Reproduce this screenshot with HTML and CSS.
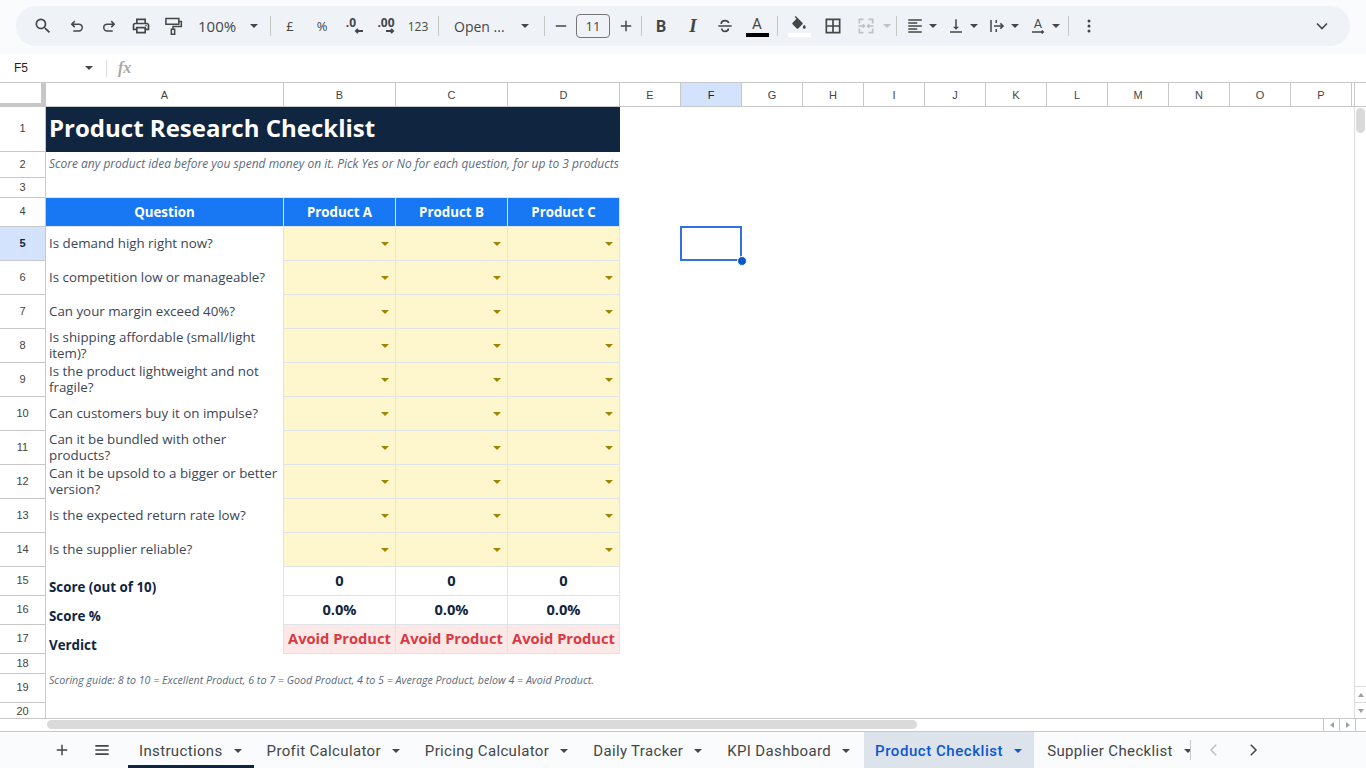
FILE: index.html
```html
<!DOCTYPE html>
<html lang="en">
<head>
    <meta charset="UTF-8">
    <meta name="viewport" content="width=device-width, initial-scale=1.0">
    <title>Product Research Checklist</title>
    <link rel="stylesheet" href="styles.css">
</head>
<body>
    <div class="toolbar-band">
        <div class="toolbar">
            <div class="tb-btn"><svg viewBox="0 0 24 24" width="20" height="20"><path d="M15.5 14h-.79l-.28-.27A6.471 6.471 0 0 0 16 9.5 6.5 6.5 0 1 0 9.5 16c1.61 0 3.09-.59 4.23-1.57l.27.28v.79l5 4.99L20.49 19l-4.99-5zm-6 0C7.01 14 5 11.99 5 9.5S7.01 5 9.5 5 14 7.01 14 9.5 11.99 14 9.5 14z"/></svg></div>
            <div class="tb-btn gap-left"><svg class="line" viewBox="0 0 24 24" width="18" height="18"><path d="M9 5.5 5 9.5l4 4M5 9.5h9.5a4.5 4.5 0 0 1 0 9H7"/></svg></div>
            <div class="tb-btn"><svg class="line" viewBox="0 0 24 24" width="18" height="18"><path d="M15 5.5l4 4-4 4M19 9.5H9.5a4.5 4.5 0 0 0 0 9H17"/></svg></div>
            <div class="tb-btn"><svg viewBox="0 0 24 24" width="20" height="20"><path d="M19 8h-1V3H6v5H5c-1.66 0-3 1.34-3 3v6h4v4h12v-4h4v-6c0-1.66-1.34-3-3-3zM8 5h8v3H8V5zm8 14H8v-4h8v4zm4-4h-2v-2H6v2H4v-4c0-.55.45-1 1-1h14c.55 0 1 .45 1 1v4z"/><circle cx="18" cy="11.5" r="1"/></svg></div>
            <div class="tb-btn"><svg class="line roller" viewBox="0 0 24 24" width="20" height="20"><path d="M3.500 3h15.500v7H3.500zM19 6.500h3v6h-10V16M10 16h4v6h-4z"/></svg></div>
            <div class="tb-zoom">100%<span class="caret"></span></div>
            <div class="tb-sep"></div>
            <div class="tb-btn tb-text">£</div>
            <div class="tb-btn tb-text">%</div>
            <div class="tb-btn tb-dec dec-less"><span>.0</span><svg class="line" viewBox="0 0 10 6" width="10" height="6"><path d="M9 3H2M4 1 2 3l2 2"/></svg></div>
            <div class="tb-btn tb-dec dec-more"><span>.00</span><svg class="line" viewBox="0 0 10 6" width="10" height="6"><path d="M1 3h7M6 1l2 2-2 2"/></svg></div>
            <div class="tb-btn tb-text tb-123">123</div>
            <div class="tb-sep"></div>
            <div class="tb-font">Open ...<span class="caret"></span></div>
            <div class="tb-sep"></div>
            <div class="tb-step step-minus"><svg class="line" viewBox="0 0 24 24" width="18" height="18"><path d="M5 12h14"/></svg></div>
            <div class="tb-size">11</div>
            <div class="tb-step"><svg class="line" viewBox="0 0 24 24" width="18" height="18"><path d="M5 12h14M12 5v14"/></svg></div>
            <div class="tb-sep sep-tight"></div>
            <div class="tb-btn tb-letter tb-bold">B</div>
            <div class="tb-btn tb-letter tb-italic">I</div>
            <div class="tb-btn"><svg class="line" viewBox="0 0 24 24" width="20" height="20"><path d="M4 12h16M7.500 9.500C7.500 7 9.500 5.500 12 5.500s4 1.200 4.500 3M8 15c.3 2.200 2 3.500 4 3.500s4-1.300 4-3.500"/></svg></div>
            <div class="tb-btn tb-color"><span>A</span><i class="bar bar-black"></i></div>
            <div class="tb-sep"></div>
            <div class="tb-btn tb-fill"><svg viewBox="0 0 24 24" width="18" height="18"><path d="M16.560 8.940 7.620 0 6.210 1.410l2.380 2.380-5.150 5.150c-.59.59-.59 1.540 0 2.120l5.500 5.500c.29.29.68.44 1.060.44s.77-.15 1.060-.44l5.500-5.500c.59-.58.59-1.530 0-2.120zM19 11.500s-2 2.170-2 3.500c0 1.100.9 2 2 2s2-.9 2-2c0-1.330-2-3.500-2-3.500z"/></svg><i class="bar bar-white"></i></div>
            <div class="tb-btn tb-borders"><svg viewBox="0 0 24 24" width="20" height="20"><path d="M3 3v18h18V3H3zm8 16H5v-6h6v6zm0-8H5V5h6v6zm8 8h-6v-6h6v6zm0-8h-6V5h6v6z"/></svg></div>
            <div class="tb-merge"><svg class="line off" viewBox="0 0 24 24" width="20" height="20"><path d="M9 4H4v5M4 15v5h5M15 4h5v5M20 15v5h-5M3 12h7M8 10l2 2-2 2M21 12h-7M16 10l-2 2 2 2"/></svg><span class="caret caret-off"></span></div>
            <div class="tb-sep"></div>
            <div class="tb-menu menu-first"><svg viewBox="0 0 24 24" width="18" height="18"><path d="M15 15H3v2h12v-2zm0-8H3v2h12V7zM3 13h18v-2H3v2zm0 8h18v-2H3v2zM3 3v2h18V3H3z"/></svg><span class="caret"></span></div>
            <div class="tb-menu"><svg viewBox="0 0 24 24" width="18" height="18"><path d="M16 13h-3V3h-2v10H8l4 4 4-4zM4 19v2h16v-2H4z"/></svg><span class="caret"></span></div>
            <div class="tb-menu"><svg class="line" viewBox="0 0 24 24" width="18" height="18"><path d="M4 4v16M11 4v4M11 16v4M8 12h12M16.500 8.500 20 12l-3.500 3.500"/></svg><span class="caret"></span></div>
            <div class="tb-menu"><svg viewBox="0 0 24 24" width="18" height="18"><text x="12" y="15" text-anchor="middle" class="icon-letter">A</text><path class="line-path" d="M4 20h15M17 18l2 2-2 2"/></svg><span class="caret"></span></div>
            <div class="tb-sep sep-last"></div>
            <div class="tb-btn"><svg viewBox="0 0 24 24" width="20" height="20"><circle cx="12" cy="6" r="1.800"/><circle cx="12" cy="12" r="1.800"/><circle cx="12" cy="18" r="1.800"/></svg></div>
            <div class="tb-btn tb-collapse"><svg class="line" viewBox="0 0 24 24" width="20" height="20"><path d="M6 9l6 6 6-6"/></svg></div>
        </div>
    </div>

    <div class="formula-bar">
        <div class="name-box">F5<span class="caret"></span></div>
        <div class="fx">fx</div>
    </div>

    <div class="col-head">
        <div class="corner"></div>
        <div>A</div><div>B</div><div>C</div><div>D</div><div>E</div>
        <div class="col-active">F</div>
        <div>G</div><div>H</div><div>I</div><div>J</div><div>K</div><div>L</div><div>M</div><div>N</div><div>O</div><div>P</div>
        <div></div>
    </div>

    <div class="sheet-body">
        <div class="rows">
            <div class="r h-45"><div class="rh">1</div><div class="title">Product Research Checklist</div></div>
            <div class="r h-26"><div class="rh">2</div><div class="subtitle">Score any product idea before you spend money on it. Pick Yes or No for each question, for up to 3 products</div></div>
            <div class="r h-20 before-head"><div class="rh">3</div><div class="blank"></div></div>
            <div class="r h-29 head-row"><div class="rh">4</div><div>Question</div><div>Product A</div><div>Product B</div><div>Product C</div></div>

            <div class="r h-34"><div class="rh rh-active">5</div><div class="q">Is demand high right now?</div><div class="pick"></div><div class="pick"></div><div class="pick"></div></div>
            <div class="r h-34"><div class="rh">6</div><div class="q">Is competition low or manageable?</div><div class="pick"></div><div class="pick"></div><div class="pick"></div></div>
            <div class="r h-34"><div class="rh">7</div><div class="q">Can your margin exceed 40%?</div><div class="pick"></div><div class="pick"></div><div class="pick"></div></div>
            <div class="r h-34"><div class="rh">8</div><div class="q">Is shipping affordable (small/light item)?</div><div class="pick"></div><div class="pick"></div><div class="pick"></div></div>
            <div class="r h-34"><div class="rh">9</div><div class="q">Is the product lightweight and not fragile?</div><div class="pick"></div><div class="pick"></div><div class="pick"></div></div>
            <div class="r h-34"><div class="rh">10</div><div class="q">Can customers buy it on impulse?</div><div class="pick"></div><div class="pick"></div><div class="pick"></div></div>
            <div class="r h-34"><div class="rh">11</div><div class="q">Can it be bundled with other products?</div><div class="pick"></div><div class="pick"></div><div class="pick"></div></div>
            <div class="r h-34"><div class="rh">12</div><div class="q">Can it be upsold to a bigger or better version?</div><div class="pick"></div><div class="pick"></div><div class="pick"></div></div>
            <div class="r h-34"><div class="rh">13</div><div class="q">Is the expected return rate low?</div><div class="pick"></div><div class="pick"></div><div class="pick"></div></div>
            <div class="r h-34"><div class="rh">14</div><div class="q">Is the supplier reliable?</div><div class="pick"></div><div class="pick"></div><div class="pick"></div></div>

            <div class="r h-29"><div class="rh">15</div><div class="label">Score (out of 10)</div><div class="val">0</div><div class="val">0</div><div class="val">0</div></div>
            <div class="r h-29"><div class="rh">16</div><div class="label">Score %</div><div class="val">0.0%</div><div class="val">0.0%</div><div class="val">0.0%</div></div>
            <div class="r h-29"><div class="rh">17</div><div class="label">Verdict</div><div class="verdict">Avoid Product</div><div class="verdict">Avoid Product</div><div class="verdict">Avoid Product</div></div>

            <div class="r h-20"><div class="rh">18</div></div>
            <div class="r h-29"><div class="rh">19</div><div class="guide">Scoring guide: 8 to 10 = Excellent Product, 6 to 7 = Good Product, 4 to 5 = Average Product, below 4 = Avoid Product.</div></div>
            <div class="r h-15"><div class="rh rh-last">20</div></div>

            <div class="selection"><span class="handle"></span></div>
        </div>
        <div class="vscroll">
            <div class="v-thumb"></div>
            <div class="v-btn"><span class="tri tri-up"></span></div>
            <div class="v-btn"><span class="tri tri-down"></span></div>
        </div>
    </div>

    <div class="hscroll">
        <div class="h-track"><div class="h-thumb"></div></div>
        <div class="h-btn"><span class="tri tri-left"></span></div>
        <div class="h-btn"><span class="tri tri-right"></span></div>
        <div class="h-end"></div>
    </div>

    <div class="tabs">
        <div class="tab-tool"><svg class="line" viewBox="0 0 24 24" width="18" height="18"><path d="M5 12h14M12 5v14"/></svg></div>
        <div class="tab-tool"><svg class="line" viewBox="0 0 24 24" width="20" height="20"><path d="M4 7h16M4 12h16M4 17h16"/></svg></div>
        <div class="tab-list">
            <div class="tab tab-first">Instructions<span class="caret"></span></div>
            <div class="tab">Profit Calculator<span class="caret"></span></div>
            <div class="tab">Pricing Calculator<span class="caret"></span></div>
            <div class="tab">Daily Tracker<span class="caret"></span></div>
            <div class="tab">KPI Dashboard<span class="caret"></span></div>
            <div class="tab tab-active">Product Checklist<span class="caret"></span></div>
            <div class="tab">Supplier Checklist<span class="caret"></span></div>
        </div>
        <div class="tab-arrow arrow-back"><svg class="line off" viewBox="0 0 24 24" width="18" height="18"><path d="M15 5l-7 7 7 7"/></svg></div>
        <div class="tab-arrow"><svg class="line" viewBox="0 0 24 24" width="18" height="18"><path d="M9 5l7 7-7 7"/></svg></div>
    </div>
</body>
</html>
```

FILE: styles.css
```css
* {
    box-sizing: border-box;
}

body {
    margin: 0;
    width: 1366px;
    height: 768px;
    overflow: hidden;
    background: #fff;
    font-family: "Liberation Sans", sans-serif;
    color: #444746;
    display: flex;
    flex-direction: column;
}

svg {
    fill: #444746;
    flex: none;
    display: block;
}

svg.line,
.line-path {
    fill: none;
    stroke: #444746;
    stroke-width: 2;
}

svg.off {
    stroke: #bdc1c6;
}

svg.roller {
    stroke-width: 1.800;
}

.caret {
    display: inline-block;
    flex: none;
    width: 0;
    height: 0;
    border-left: 4px solid transparent;
    border-right: 4px solid transparent;
    border-top: 4px solid #444746;
}

.caret-off {
    border-top-color: #bdc1c6;
}

/* toolbar */
.toolbar-band {
    height: 54px;
    background: #f9fbfd;
    padding: 6px 16px 8px;
    flex: none;
}

.toolbar {
    height: 40px;
    background: #eff3f8;
    border-radius: 20px;
    display: flex;
    align-items: center;
    padding-left: 11px;
}

.tb-btn {
    width: 32px;
    height: 32px;
    flex: none;
    display: flex;
    align-items: center;
    justify-content: center;
}

.gap-left {
    margin-left: 2px;
}

.tb-zoom {
    width: 68px;
    margin-left: 9px;
    font-family: "Open Sans", sans-serif;
    font-size: 15px;
    display: flex;
    align-items: center;
    justify-content: space-between;
    padding-right: 8px;
}

.tb-sep {
    width: 1px;
    height: 20px;
    background: #c7c7c7;
    margin: 0 3px 0 4px;
    flex: none;
}

.sep-tight {
    margin: 0 3px 0 0;
}

.sep-last {
    margin: 0 4px 0 -2px;
}

.tb-text {
    font-family: "Open Sans", sans-serif;
    font-size: 13px;
}

.tb-123 {
    font-size: 12px;
}

.tb-dec {
    flex-direction: column;
    font-family: "Open Sans", sans-serif;
    font-weight: 700;
    font-size: 12px;
    line-height: 11px;
    padding-bottom: 1px;
}

.dec-less span {
    margin-right: 6px;
}

.dec-less svg {
    margin-left: 10px;
}

.dec-more svg {
    margin-left: 7px;
}

.tb-font {
    width: 98px;
    padding-left: 12px;
    padding-right: 11px;
    font-family: "Open Sans", sans-serif;
    font-size: 14px;
    display: flex;
    align-items: center;
    justify-content: space-between;
}

.tb-step {
    width: 31px;
    display: flex;
    justify-content: center;
}

.step-minus {
    width: 30px;
    margin-left: -2px;
}

.tb-size {
    width: 34px;
    height: 24px;
    border: 1px solid #747775;
    border-radius: 4px;
    font-family: "Open Sans", sans-serif;
    font-size: 13px;
    line-height: 22px;
    text-align: center;
    flex: none;
}

.tb-letter {
    font-size: 16px;
}

.tb-bold {
    font-family: Roboto, sans-serif;
    font-weight: 700;
}

.tb-italic {
    font-family: "Liberation Serif", serif;
    font-style: italic;
    font-weight: 700;
    font-size: 19px;
}

.tb-color {
    flex-direction: column;
    font-family: Roboto, sans-serif;
    font-size: 15px;
    line-height: 15px;
    padding-top: 1px;
}

.bar {
    display: block;
    height: 4px;
    width: 23px;
    margin-top: 1px;
}

.bar-black {
    background: #000;
}

.bar-white {
    background: #fff;
    margin-top: -1px;
}

.tb-fill {
    flex-direction: column;
    margin-left: 2px;
}

.tb-borders {
    margin-left: 2px;
}

.tb-merge {
    width: 43px;
    padding-left: 7px;
    flex: none;
    display: flex;
    align-items: center;
    gap: 7px;
}

.tb-menu {
    display: flex;
    align-items: center;
    gap: 5px;
    width: 41px;
    flex: none;
}

.menu-first {
    margin-left: 6px;
}

.tb-collapse {
    margin-left: 201px;
}

/* formula bar */
.formula-bar {
    height: 28px;
    flex: none;
    display: flex;
    align-items: center;
    background: #fff;
}

.name-box {
    width: 107px;
    height: 17px;
    padding: 0 13px 0 14px;
    font-size: 12px;
    line-height: 17px;
    color: #1f1f1f;
    border-right: 1px solid #dadce0;
    display: flex;
    align-items: center;
    justify-content: space-between;
}

.fx {
    margin-left: 11px;
    font-family: "Liberation Serif", serif;
    font-style: italic;
    font-weight: 700;
    font-size: 16px;
    color: #a8a8a8;
}

/* column letters */
.col-head {
    height: 25px;
    flex: none;
    display: grid;
    grid-template-columns: 46px 238px 112px 112px 112px repeat(12, 61px) 3px 1fr;
    border-top: 1px solid #c7c7c7;
    border-bottom: 1px solid #c7c7c7;
    font-size: 11px;
    color: #444;
}

.col-head > div {
    display: flex;
    align-items: center;
    justify-content: center;
    border-right: 1px solid #c7c7c7;
}

.col-head .col-active {
    background: #d3e3fd;
    color: #0f2540;
}

.col-head .corner {
    border-right: 5px solid #c7c7c7;
    border-bottom: 4px solid #c7c7c7;
    margin-bottom: -1px;
}

/* grid */
.sheet-body {
    height: 611px;
    flex: none;
    display: flex;
}

.rows {
    width: 1354px;
    flex: none;
    position: relative;
    overflow: hidden;
}

.r {
    display: grid;
    grid-template-columns: 46px 238px 112px 112px 112px;
    font-family: "Open Sans", sans-serif;
    font-size: 13.33px;
    line-height: 16px;
}

.h-45 { height: 45px; }
.h-34 { height: 34px; }
.h-29 { height: 29px; }
.h-26 { height: 26px; }
.h-20 { height: 20px; }
.h-15 { height: 15px; }

.rh {
    font-family: "Liberation Sans", sans-serif;
    font-size: 11px;
    color: #444;
    display: flex;
    align-items: center;
    justify-content: center;
    padding-bottom: 2px;
    border-right: 1px solid #c7c7c7;
    border-bottom: 1px solid #c7c7c7;
}

.rh-active {
    background: #d3e3fd;
    color: #0f2540;
    font-weight: 700;
}

.rh-last {
    border-bottom: 0;
}

.title {
    grid-column: span 4;
    background: #0f2540;
    color: #fff;
    font-size: 24px;
    font-weight: 700;
    padding: 0 0 3px 3px;
    display: flex;
    align-items: center;
}

.subtitle,
.guide {
    grid-column: span 4;
    padding-left: 3px;
    font-style: italic;
    white-space: nowrap;
    overflow: hidden;
    color: #5b6b7d;
}

.subtitle {
    font-size: 12px;
    display: flex;
    align-items: center;
    padding-bottom: 2px;
}

.guide {
    font-size: 10.67px;
    line-height: 13px;
}

.blank {
    grid-column: span 4;
    border-bottom: 1px solid #dfe3ea;
}

.head-row > div:not(.rh) {
    background: #1877f2;
    color: #fff;
    font-weight: 700;
    display: flex;
    align-items: center;
    justify-content: center;
    border-right: 1px solid #dfe3ea;
    border-bottom: 1px solid #dfe3ea;
}

.q,
.label {
    padding-left: 3px;
    padding-right: 3px;
    display: flex;
    align-items: center;
    color: #3a4656;
    border-right: 1px solid #dfe3ea;
}

.q {
    padding-bottom: 2px;
}

.label {
    align-items: flex-end;
    font-weight: 700;
    font-size: 13.33px;
    line-height: 17px;
    color: #0f2540;
}

.pick,
.val,
.verdict {
    display: flex;
    align-items: center;
    border-right: 1px solid #dfe3ea;
    border-bottom: 1px solid #dfe3ea;
}

.pick {
    background: #fef6cd;
    justify-content: flex-end;
    padding-right: 6px;
}

.pick::after {
    content: "";
    width: 0;
    height: 0;
    border-left: 4px solid transparent;
    border-right: 4px solid transparent;
    border-top: 4px solid #a08600;
}

.val,
.verdict {
    justify-content: center;
    padding-bottom: 2px;
    font-size: 14.67px;
    font-weight: 700;
    color: #0f2540;
    white-space: nowrap;
}

.verdict {
    background: #fde8e8;
    color: #d93a41;
}

/* active cell sits over the grid */
.selection {
    position: absolute;
    left: 680px;
    top: 119px;
    width: 62px;
    height: 35px;
    border: 2px solid #3270e4;
}

.handle {
    position: absolute;
    right: -7px;
    bottom: -7px;
    width: 10px;
    height: 10px;
    border-radius: 50%;
    background: #0b57d0;
    border: 1px solid #fff;
}

/* scrollbars */
.vscroll {
    flex: 1;
    border-left: 1px solid #dadce0;
    display: flex;
    flex-direction: column;
    align-items: stretch;
    padding-top: 1px;
}

.v-thumb {
    height: 25px;
    width: 9px;
    margin-left: 1px;
    margin-bottom: 553px;
    border-radius: 5px;
    background: #dadada;
}

.v-btn {
    height: 16px;
    border-top: 1px solid #dadce0;
    display: flex;
    align-items: center;
    justify-content: center;
}

.tri {
    width: 0;
    height: 0;
    border: 3px solid transparent;
}

.tri-up { border-bottom: 4px solid #9aa0a6; border-top: 0; }
.tri-down { border-top: 4px solid #9aa0a6; border-bottom: 0; }
.tri-left { border-right: 4px solid #9aa0a6; border-left: 0; }
.tri-right { border-left: 4px solid #9aa0a6; border-right: 0; }

.hscroll {
    height: 13px;
    flex: none;
    display: flex;
    border-top: 1px solid #c7c7c7;
}

.h-track {
    width: 1323px;
    padding: 1px 0 0 47px;
    flex: none;
}

.h-thumb {
    width: 870px;
    height: 9px;
    border-radius: 5px;
    background: #dadada;
}

.h-btn {
    width: 16px;
    flex: none;
    border-left: 1px solid #c7c7c7;
    display: flex;
    align-items: center;
    justify-content: center;
}

.h-end {
    flex: 1;
    border-left: 1px solid #c7c7c7;
}

/* sheet tabs */
.tabs {
    height: 37px;
    flex: none;
    display: flex;
    align-items: stretch;
    background: #f9fbfd;
    border-top: 1px solid #c7c7c7;
    padding-left: 47px;
}

.tab-tool {
    width: 30px;
    margin-right: 10px;
    display: flex;
    align-items: center;
    justify-content: center;
}

.tab-list {
    margin-left: 1px;
    width: 1063px;
    display: flex;
    gap: 2px;
    overflow: hidden;
    position: relative;
    flex: none;
}

.tab-list::after {
    content: "";
    position: absolute;
    right: 0;
    top: 8px;
    bottom: 8px;
    width: 1px;
    background: #c7c7c7;
}

.tab {
    flex: none;
    display: flex;
    align-items: center;
    gap: 11px;
    padding: 2px 12px 0 11px;
    font-family: Roboto, sans-serif;
    font-size: 15px;
    letter-spacing: 0.35px;
    white-space: nowrap;
    color: #444746;
}

.tab-first {
    border-bottom: 3px solid #0f2540;
    padding-top: 5px;
}

.tab-active {
    background: #dde3ea;
    color: #0b57d0;
    font-weight: 500;
    letter-spacing: 0.55px;
}

.tab-active .caret {
    border-top-color: #0b57d0;
}

.tab-arrow {
    width: 39px;
    display: flex;
    align-items: center;
    justify-content: center;
}

.arrow-back {
    margin-left: 3px;
}

.icon-letter {
    font-family: Roboto, sans-serif;
    font-size: 17px;
    fill: #444746;
}
```
